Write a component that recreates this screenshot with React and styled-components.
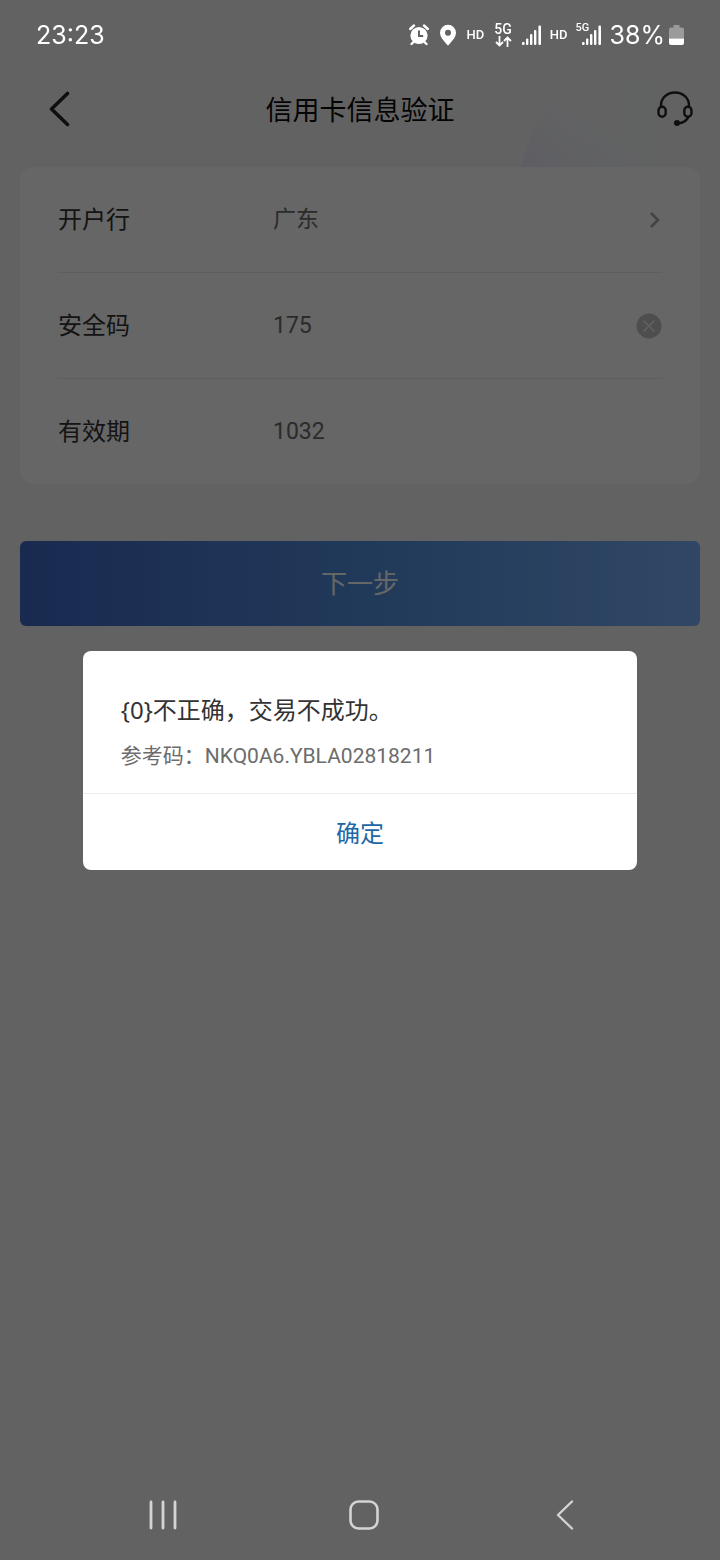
import React, { useState } from 'react';
import styled, { createGlobalStyle, ThemeProvider } from 'styled-components';

const theme = {
  colors: {
    white: '#ffffff',
    page: '#f6f6f6',
    black: '#0c0c0c',
    icon: '#262626',
    text: '#333333',
    gray: '#6c6c6c',
    line: '#ececec',
    blue: '#1d67a6',
  },
};

const GlobalStyle = createGlobalStyle`
  * {
    box-sizing: border-box;
  }

  body {
    margin: 0;
    background-color: #f6f6f6;
    font-family: Roboto, 'Noto Sans CJK SC', sans-serif;
  }

  svg {
    display: block;
    flex-shrink: 0;
  }

  button,
  input,
  select {
    font-family: inherit;
    margin: 0;
    padding: 0;
    border: none;
    background: none;
  }
`;

const Screen = styled.div`
  position: relative;
  display: flex;
  flex-direction: column;
  min-height: 100vh;
  background-color: ${props => props.theme.colors.page};
`;

const StatusBar = styled.div`
  position: relative;
  z-index: 3;
  display: flex;
  align-items: center;
  justify-content: space-between;
  height: 69px;
  padding: 0 36px;
  color: ${props => props.theme.colors.white};
  font-family: Inter, sans-serif;
  font-size: 25px;
  line-height: 32px;
`;

const StatusIcons = styled.div`
  display: flex;
  align-items: center;
  gap: ${props => props.$gap};
`;

const Hd = styled.span`
  font-family: Roboto, sans-serif;
  font-size: 13px;
  font-weight: 500;
  line-height: 16px;
`;

const Percent = styled.span`
  margin-right: -4px;
`;

const NetworkLabel = styled.div`
  display: flex;
  flex-direction: column;
  align-items: center;
  font-family: Roboto, sans-serif;
  font-size: 14px;
  font-weight: 500;
  line-height: 14px;
`;

const SmallNetwork = styled.div`
  position: relative;
  padding-left: 6px;

  span {
    position: absolute;
    top: -3px;
    left: 0;
    font-family: Roboto, sans-serif;
    font-size: 11px;
    font-weight: 500;
    line-height: 12px;
  }
`;

const Header = styled.header`
  position: relative;
  display: grid;
  grid-template-columns: 80px 1fr 80px;
  align-items: center;
  height: 79px;

  h1 {
    margin: 0;
    color: ${props => props.theme.colors.black};
    font-family: 'Noto Sans CJK SC', sans-serif;
    font-size: 27px;
    font-weight: 400;
    line-height: 40px;
    text-align: center;
  }
`;

const HeaderButton = styled.button`
  display: flex;
  justify-content: ${props => props.$side};
  padding: ${props => props.$pad};
  color: ${props => props.theme.colors.icon};
`;

const Decoration = styled.svg`
  position: absolute;
  top: 0;
  right: 0;
`;

const Form = styled.form`
  position: relative;
  flex: 1;
  padding: 19px 20px 0;
`;

const Card = styled.div`
  padding: 0 38px;
  border-radius: 14px;
  background-color: ${props => props.theme.colors.white};
`;

const Row = styled.div`
  box-sizing: content-box;
  display: grid;
  grid-template-columns: 215px 1fr 26px;
  align-items: center;
  height: 105px;

  & + & {
    border-top: 1px solid ${props => props.theme.colors.line};
  }

  label {
    color: ${props => props.theme.colors.text};
    font-size: 24px;
    line-height: 36px;
  }

  input,
  select {
    width: 100%;
    color: ${props => props.theme.colors.gray};
    font-size: 23px;
    line-height: 36px;
    appearance: none;
    outline: none;
  }
`;

const SubmitButton = styled.button`
  width: 100%;
  height: 85px;
  margin-top: 57px;
  border-radius: 6px;
  background-image: linear-gradient(90deg, #4069c8, #5490e0 50%, #78b2fc);
  color: ${props => props.theme.colors.white};
  font-size: 26px;
  line-height: 36px;
`;

const Overlay = styled.div`
  position: fixed;
  inset: 0;
  z-index: 2;
  display: flex;
  align-items: center;
  justify-content: center;
  padding-bottom: 40px;
  background-color: rgba(0, 0, 0, 0.6);
`;

const Dialog = styled.div`
  width: 77%;
  border-radius: 8px;
  background-color: ${props => props.theme.colors.white};

  div.message {
    padding: 42px 38px 20px;
  }

  p {
    margin: 0;
  }

  p.title {
    color: ${props => props.theme.colors.text};
    font-family: 'Noto Sans', 'Noto Sans CJK SC', sans-serif;
    font-size: 24px;
    line-height: 34px;
  }

  p.code {
    margin-top: 12px;
    color: ${props => props.theme.colors.gray};
    font-size: 21px;
    line-height: 34px;
  }
`;

const ConfirmButton = styled.button`
  width: 100%;
  height: 77px;
  border-top: 1px solid ${props => props.theme.colors.line};
  color: ${props => props.theme.colors.blue};
  font-size: 24px;
`;

const NavBar = styled.nav`
  position: relative;
  z-index: 3;
  display: grid;
  grid-template-columns: repeat(3, 1fr);
  height: 90px;
  padding: 0 54px 0 62px;
  color: #d4d4d4;

  button {
    display: flex;
    align-items: center;
    justify-content: center;
    color: inherit;
  }
`;

function SignalIcon() {
  return (
    <svg width="20" height="20" viewBox="0 0 20 20" fill="currentColor">
      <rect x="0" y="17" width="2.600" height="3" rx="1" />
      <rect x="4" y="13.500" width="2.400" height="6.500" rx="1" />
      <rect x="8" y="9" width="2.400" height="11" rx="1" />
      <rect x="12" y="5" width="2.400" height="15" rx="1" />
      <rect x="16.400" y="0.500" width="2.600" height="19.500" rx="1" />
    </svg>
  );
}

function AlarmIcon() {
  return (
    <svg width="20" height="22" viewBox="0 0 20 22" fill="none">
      <circle cx="10" cy="11.500" r="8.600" fill="#fff" />
      <path d="M1.200 5 5 1.500M18.800 5 15 1.500M4.500 18l-2 2M15.500 18l2 2" stroke="#fff" strokeWidth="2.400" strokeLinecap="round" />
      <path d="M10 6.500V12h4.200" stroke="#626262" strokeWidth="2" />
    </svg>
  );
}

function PinIcon() {
  return (
    <svg width="18" height="22" viewBox="0 0 18 22">
      <path fillRule="evenodd" fill="#fff" d="M9 .8a8 8 0 0 1 8 8c0 5-5.500 9.800-7.300 12.200a.9.9 0 0 1-1.400 0C6.500 18.600 1 13.800 1 8.800a8 8 0 0 1 8-8Zm0 5a3 3 0 1 0 0 6 3 3 0 0 0 0-6Z" />
    </svg>
  );
}

function BatteryIcon() {
  return (
    <svg width="15" height="20" viewBox="0 0 15 20">
      <path d="M4.500 0h6v2.500H13a2 2 0 0 1 2 2V13.500H0V4.500a2 2 0 0 1 2-2h2.500z" fill="#9b9b9b" />
      <path d="M0 13.500h15V18a2 2 0 0 1-2 2H2a2 2 0 0 1-2-2z" fill="#fff" />
    </svg>
  );
}

function HeadsetIcon() {
  return (
    <svg width="36" height="36" viewBox="0 0 36 36" fill="none" stroke="currentColor" strokeWidth="2.400">
      <path d="M4 16v-1.500C4 7 10.200 1.500 18 1.500S32 7 32 14.500V16" />
      <rect x="1.500" y="15.800" width="7.200" height="10" rx="3.600" />
      <rect x="27.300" y="15.800" width="7.200" height="10" rx="3.600" />
      <path d="M31.500 25.500c-1.500 4-5 6.500-10.500 6.800" />
      <circle cx="20" cy="32" r="3" fill="currentColor" stroke="none" />
    </svg>
  );
}

function App() {
  const [Bank, setBank] = useState('广东');
  const [SafeCode, setSafeCode] = useState('175');
  const [Expiry, setExpiry] = useState('1032');
  const [ShowError, setShowError] = useState(true);

  const handleSubmit = (event) => {
    event.preventDefault();
    setShowError(true);
  }

  const renderError = () => {
    return (
      <Overlay>
        <Dialog role="alertdialog" aria-modal="true">
          <div className="message">
            <p className="title">{'{0}不正确，交易不成功。'}</p>
            <p className="code">参考码：NKQ0A6.YBLA02818211</p>
          </div>
          <ConfirmButton type="button" onClick={() => setShowError(false)}>确定</ConfirmButton>
        </Dialog>
      </Overlay>
    );
  }

  return (
    <ThemeProvider theme={theme}>
      <GlobalStyle />
      <Screen>
        <Decoration width="200" height="280" viewBox="0 0 200 280">
          <defs>
            <linearGradient id="beam" x1="0" y1="1" x2="1" y2="0.4">
              <stop offset="0" stopColor="#e9eafa" />
              <stop offset="0.900" stopColor="#f1f4fa" stopOpacity="0" />
            </linearGradient>
            <linearGradient id="haze" x1="0" y1="0" x2="1" y2="0">
              <stop offset="0" stopColor="#f0f3f7" stopOpacity="0" />
              <stop offset="0.500" stopColor="#f0f3f7" />
              <stop offset="1" stopColor="#f4f6f8" />
            </linearGradient>
          </defs>
          <path d="M40 80h160v170H40z" fill="url(#haze)" opacity="0.500" />
          <path d="M0 168 14 126 34 100l90 20v48z" fill="url(#beam)" />
        </Decoration>
        <StatusBar>
          <span>23:23</span>
          <StatusIcons $gap="8px">
            <StatusIcons $gap="10px">
              <AlarmIcon />
              <PinIcon />
              <Hd>HD</Hd>
              <NetworkLabel>
                5G
                <svg width="17" height="11" viewBox="0 0 17 11" fill="none" stroke="currentColor" strokeWidth="1.800">
                  <path d="M4.500 0v9.500M1 6l3.500 3.500L8 6M12.500 11V1.500M9 5l3.500-3.500L16 5" />
                </svg>
              </NetworkLabel>
              <SignalIcon />
            </StatusIcons>
            <Hd>HD</Hd>
            <SmallNetwork>
              <span>5G</span>
              <SignalIcon />
            </SmallNetwork>
            <Percent>38%</Percent>
            <BatteryIcon />
          </StatusIcons>
        </StatusBar>
        <Header>
          <HeaderButton type="button" aria-label="返回" $side="flex-start" $pad="0 0 0 49px">
            <svg width="21" height="36" viewBox="0 0 21 36" fill="none" stroke="currentColor" strokeWidth="3.600" strokeLinecap="round" strokeLinejoin="round">
              <path d="M18.500 2.500 2.500 18l16 15.500" />
            </svg>
          </HeaderButton>
          <h1>信用卡信息验证</h1>
          <HeaderButton type="button" aria-label="客服" $side="flex-end" $pad="0 27px 0 0">
            <HeadsetIcon />
          </HeaderButton>
        </Header>
        <Form onSubmit={handleSubmit}>
          <Card>
            <Row>
              <label htmlFor="bank">开户行</label>
              <select id="bank" value={Bank} onChange={(event) => setBank(event.target.value)}>
                <option>广东</option>
              </select>
              <svg width="26" height="18" viewBox="0 0 26 18" fill="none" stroke="#a8a8a8" strokeWidth="2.600">
                <path d="m15 2 7 7-7 7" />
              </svg>
            </Row>
            <Row>
              <label htmlFor="safe-code">安全码</label>
              <input id="safe-code" type="text" value={SafeCode} onChange={(event) => setSafeCode(event.target.value)} />
              <button type="button" aria-label="清除" onClick={() => setSafeCode('')}>
                <svg width="26" height="26" viewBox="0 0 26 26" fill="none">
                  <circle cx="13" cy="13" r="12.500" fill="#c4c4c4" />
                  <path d="m7.500 7.500 11 11M18.500 7.500l-11 11" stroke="#f2f2f2" strokeWidth="1.600" />
                </svg>
              </button>
            </Row>
            <Row>
              <label htmlFor="expiry">有效期</label>
              <input id="expiry" type="text" value={Expiry} onChange={(event) => setExpiry(event.target.value)} />
            </Row>
          </Card>
          <SubmitButton type="submit">下一步</SubmitButton>
        </Form>
        {ShowError && renderError()}
        <NavBar>
          <button type="button" aria-label="最近任务">
            <svg width="30" height="30" viewBox="0 0 30 30" fill="none" stroke="currentColor" strokeWidth="2.800" strokeLinecap="round">
              <path d="M3 2v26M15 2v26M27 2v26" />
            </svg>
          </button>
          <button type="button" aria-label="主屏幕">
            <svg width="30" height="30" viewBox="0 0 30 30" fill="none" stroke="currentColor" strokeWidth="2.600">
              <rect x="1.500" y="1.500" width="27" height="27" rx="8" />
            </svg>
          </button>
          <button type="button" aria-label="返回键">
            <svg width="18" height="30" viewBox="0 0 18 30" fill="none" stroke="currentColor" strokeWidth="2.400" strokeLinecap="round" strokeLinejoin="round">
              <path d="M16 1.500 2 15l14 13.500" />
            </svg>
          </button>
        </NavBar>
      </Screen>
    </ThemeProvider>
  );
}

export default App;
